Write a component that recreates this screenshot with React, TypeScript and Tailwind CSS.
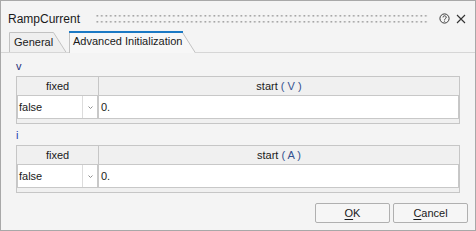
import React from "react";

const font = "font-['Liberation_Sans',Arial,sans-serif]";

function Grip() {
  return (
    <svg width="332" height="8" className="block mt-[14px]">
      <defs>
        <pattern id="grip" width="4.5" height="6" patternUnits="userSpaceOnUse">
          <rect x="0.5" y="0" width="1.6" height="1.6" fill="#9c9c9c" />
        </pattern>
      </defs>
      <rect x="0" y="0" width="332" height="8" fill="url(#grip)" />
    </svg>
  );
}

function HelpIcon() {
  return (
    <svg width="11" height="11" viewBox="0 0 11 11" className="block mt-[12px] ml-[11px]">
      <circle cx="5.5" cy="5.5" r="4.6" fill="none" stroke="#3a3a3a" strokeWidth="1" />
      <path d="M4 4.4 a1.6 1.6 0 1 1 2.3 1.4 c-0.5 0.3 -0.8 0.6 -0.8 1.1" fill="none" stroke="#3a3a3a" strokeWidth="0.9" />
      <circle cx="5.5" cy="8.1" r="0.6" fill="#3a3a3a" />
    </svg>
  );
}

function CloseIcon() {
  return (
    <svg width="10" height="10" viewBox="0 0 10 10" className="block mt-[13px] ml-[6px]">
      <path d="M1 1 L9 9 M9 1 L1 9" stroke="#333333" strokeWidth="1.1" />
    </svg>
  );
}

function Chevron() {
  return (
    <svg width="5" height="3" viewBox="0 0 5 3" className="block">
      <path d="M0.5 0.5 L2.5 2.5 L4.5 0.5" fill="none" stroke="#8e8e8e" strokeWidth="1" />
    </svg>
  );
}

function InitTable({ unit }: { unit: string }) {
  return (
    <div className="w-[444px] h-[48px] border border-[#c6c6c6] bg-[#f0f0f0] flex flex-col">
      <div className="flex h-[18px] text-[11px] leading-[18px] text-[#1a1a1a]">
        <div className="w-[82px] border-r border-[#c6c6c6] text-center">fixed</div>
        <div className="flex-1 text-center">
          start <span className="text-[#34508f]">( {unit} )</span>
        </div>
      </div>
      <div className="flex h-[24px] text-[11px] leading-[22px] text-[#1a1a1a]">
        <div className="w-[81px] flex bg-white border border-[#c8c8c8]">
          <div className="w-[65px] pl-[1px] border-r border-[#dcdcdc]">false</div>
          <div className="flex-1 flex items-center justify-center">
            <Chevron />
          </div>
        </div>
        <div className="flex-1 bg-white border border-[#c8c8c8] pl-[2px]">0.</div>
      </div>
    </div>
  );
}

function Tabs() {
  return (
    <div className="flex items-end h-[22px] text-[11px] leading-[13px] text-[#1a1a1a]">
      <div className="w-[8px] h-[1px] bg-[#d6d6d6]" />
      <div className="relative w-[58px] h-[21px] pt-[4px] pl-[5px]">
        <svg width="58" height="21" className="absolute left-0 top-0">
          <path d="M0.5 21 V0.5 H44.5 L57.5 21 Z" fill="#efefef" stroke="#c2c2c2" strokeWidth="1" />
          <rect x="0" y="20" width="58" height="1" fill="#d6d6d6" />
        </svg>
        <span className="relative">General</span>
      </div>
      <div className="w-[2px] h-[1px] bg-[#d6d6d6]" />
      <div className="relative w-[127px] h-[22px] pt-[4px] pl-[4px]">
        <svg width="127" height="22" className="absolute left-0 top-0">
          <path d="M0.5 22 V1 H113.5 L126.5 22 Z" fill="#f7f7f7" stroke="none" />
          <path d="M0.5 22 V1.5 M113.5 1.5 L126.5 22" fill="none" stroke="#c2c2c2" strokeWidth="1" />
          <rect x="0" y="0" width="114" height="2" fill="#1b79c4" />
        </svg>
        <span className="relative whitespace-nowrap">Advanced Initialization</span>
      </div>
      <div className="flex-1 h-[1px] bg-[#d6d6d6]" />
    </div>
  );
}

export default function App() {
  return (
    <div className={`${font} w-[476px] h-[231px] border border-[#a8a8a8] bg-[#f4f4f4] flex flex-col overflow-hidden`}>
      <div className="flex items-start h-[30px] pl-[7px]">
        <div className="w-[88px] pt-[11px] text-[12px] leading-[15px] text-[#1a1a1a]">RampCurrent</div>
        <Grip />
        <HelpIcon />
        <CloseIcon />
      </div>
      <Tabs />
      <div className="flex flex-col px-[15px]">
        <div className="mt-[7px] text-[11px] leading-[13px] text-[#1f2f7a]">v</div>
        <div className="mt-[3px]">
          <InitTable unit="V" />
        </div>
        <div className="mt-[5px] text-[11px] leading-[13px] text-[#2343b0]">i</div>
        <div className="mt-[3px]">
          <InitTable unit="A" />
        </div>
      </div>
      <div className="flex justify-end gap-[3px] pr-[7px] mt-[10px] text-[11px] text-[#1a1a1a]">
        <button className="w-[75px] h-[20px] border border-[#b0b0b0] rounded-[2px] bg-[#f6f6f6] leading-[18px]">
          <u className="underline-offset-[2px]">O</u>K
        </button>
        <button className="w-[75px] h-[20px] border border-[#b0b0b0] rounded-[2px] bg-[#f6f6f6] leading-[18px]">
          <u className="underline-offset-[2px]">C</u>ancel
        </button>
      </div>
    </div>
  );
}
